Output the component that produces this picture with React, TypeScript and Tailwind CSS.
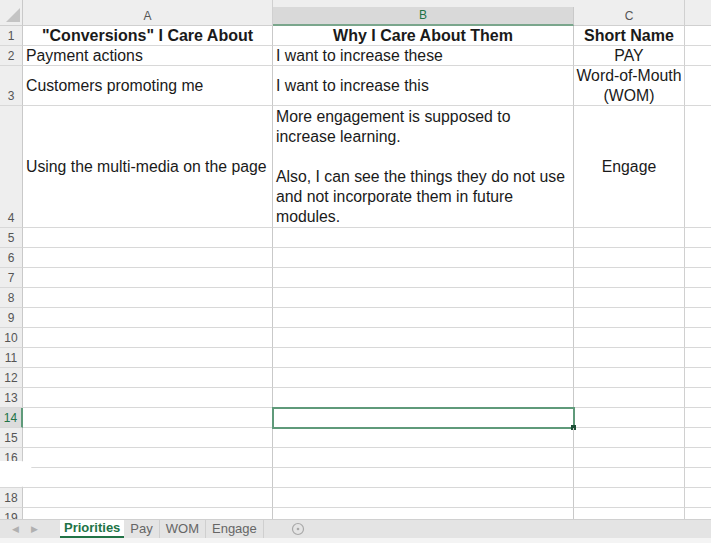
import React from "react";

type Row = {
  n: number;
  h: string;
  a?: React.ReactNode;
  b?: React.ReactNode;
  c?: React.ReactNode;
  bold?: boolean;
};

const rows: Row[] = [
  {
    n: 1,
    h: "h-[20px]",
    a: <span className="block text-center">"Conversions" I Care About</span>,
    b: <span className="block text-center">Why I Care About Them</span>,
    c: <span className="block text-center">Short Name</span>,
    bold: true,
  },
  { n: 2, h: "h-[20px]", a: "Payment actions", b: "I want to increase these", c: <span className="block text-center">PAY</span> },
  {
    n: 3,
    h: "h-[40px]",
    a: "Customers promoting me",
    b: "I want to increase this",
    c: (
      <span className="block text-center leading-[20px]">
        Word-of-Mouth
        <br />
        (WOM)
      </span>
    ),
  },
  {
    n: 4,
    h: "h-[122px]",
    a: "Using the multi-media on the page",
    b: (
      <span className="block leading-[20px] pt-[1px]">
        More engagement is supposed to
        <br />
        increase learning.
        <br />
        <br />
        Also, I can see the things they do not use
        <br />
        and not incorporate them in future
        <br />
        modules.
      </span>
    ),
    c: <span className="block text-center">Engage</span>,
  },
];

const emptyRows = [5, 6, 7, 8, 9, 10, 11, 12, 13, 14, 15, 16, 17, 18, 19];

const cols = "grid grid-cols-[23px_250px_301px_111px_1fr] grid-rows-1";

const SheetRow = ({ row, selected }: { row: Row; selected?: boolean }) => (
  <div className={`${cols} shrink-0 whitespace-nowrap ${row.h}`}>
    <div
      className={`flex items-end justify-center pb-[1px] text-[12px] leading-[16px] border-b border-[#d8d8d8] ${
        selected
          ? "bg-[#dcdcdc] text-[#217346] border-r-2 border-r-[#5f9a7a]"
          : "bg-[#eeeeee] text-[#555] border-r border-r-[#c9c9c9]"
      }`}
    >
      {row.n}
    </div>
    <div
      className={`flex items-center px-[3px] overflow-hidden border-r border-r-[#c9c9c9] border-b border-[#d8d8d8] ${
        row.bold ? "font-bold text-[16px]" : ""
      }`}
    >
      <div className="w-full">{row.a}</div>
    </div>
    <div
      className={`relative flex items-center px-[3px] border-r border-r-[#c9c9c9] border-b border-[#d8d8d8] ${
        row.bold ? "font-bold text-[16px]" : ""
      } ${selected ? "outline-2 outline-[#5f9a7a] -outline-offset-1" : ""}`}
    >
      <div className="w-full">{row.b}</div>
      {selected && <div className="absolute -right-[3px] -bottom-[3px] w-[5px] h-[5px] bg-[#1d4f36]" />}
    </div>
    <div
      className={`flex items-center px-[2px] overflow-hidden border-r border-r-[#d0d0d0] border-b border-[#d8d8d8] ${
        row.bold ? "font-bold text-[16px]" : ""
      }`}
    >
      <div className="w-full">{row.c}</div>
    </div>
    <div className="border-b border-[#d8d8d8]" />
  </div>
);

export default function App() {
  return (
    <div
      className="relative w-[711px] h-[543px] overflow-hidden bg-white flex flex-col text-[15.8px] leading-[20px] text-[#1a1a1a]"
      style={{ fontFamily: '"Liberation Sans", Arial, sans-serif' }}
    >
      {/* column headers */}
      <div className={`${cols} h-[26px] shrink-0 bg-[#eeeeee] text-[12px] leading-[16px] text-[#555]`}>
        <div className="relative border-r border-[#c9c9c9] border-b border-b-[#d0d0d0]">
          <svg className="absolute right-[2px] bottom-[3px]" width="14" height="14" viewBox="0 0 14 14">
            <polygon points="14,0 14,14 0,14" fill="#c4c4c4" />
          </svg>
        </div>
        <div className="flex items-end justify-center pb-[1px] border-r border-[#d0d0d0] border-b border-b-[#d0d0d0]">A</div>
        <div className="flex items-end justify-center pb-[1px] mt-[7px] bg-[#d9d9d9] text-[#217346] border-r border-[#c9c9c9] border-b-2 border-b-[#7aa68c]">
          B
        </div>
        <div className="flex items-end justify-center pb-[1px] border-r border-[#d0d0d0] border-b border-b-[#d0d0d0]">C</div>
        <div className="border-b border-b-[#d0d0d0]" />
      </div>

      {rows.map((r) => (
        <SheetRow key={r.n} row={r} />
      ))}

      <div className="flex-1 flex flex-col overflow-hidden">
        {emptyRows.map((n) => (
          <SheetRow key={n} row={{ n, h: "h-[20px]" }} selected={n === 14} />
        ))}
      </div>

      {/* sheet tabs */}
      <div className="h-[19px] shrink-0 flex items-stretch bg-[#e4e4e4] border-t border-[#d0d0d0] text-[13px] leading-[16px] text-[#666]">
        <div className="w-[60px] flex items-center gap-[12px] pl-[12px] text-[9px] text-[#b0b0b0]">
          <span>◀</span>
          <span>▶</span>
        </div>
        <div className="flex items-center px-[4px] bg-white text-[#217346] font-bold border-b-2 border-[#217346]">
          Priorities
        </div>
        <div className="flex items-center px-[6px] border-r border-[#cfcfcf]">Pay</div>
        <div className="flex items-center px-[6px] border-r border-[#cfcfcf]">WOM</div>
        <div className="flex items-center px-[6px] border-r border-[#cfcfcf]">Engage</div>
        <div className="flex items-center pl-[27px]">
          <svg width="14" height="14" viewBox="0 0 14 14">
            <circle cx="7" cy="7" r="5.5" fill="none" stroke="#a8a8a8" strokeWidth="1.2" />
            <circle cx="7" cy="7" r="1.3" fill="#a8a8a8" />
          </svg>
        </div>
      </div>
      <div className="h-[5px] shrink-0 bg-[#f4f4f4]" />

      {/* white smudge over row 17 header */}
      <div className="absolute left-0 top-[461px] w-[33px] h-[26px] bg-white rounded-r-full" />
    </div>
  );
}
